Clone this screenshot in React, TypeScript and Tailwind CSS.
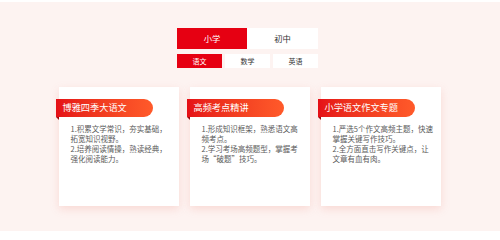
const cards = [
  {
    title: "博雅四季大语文",
    lines: [["1.积累文学常识，夯实基础，", "拓宽知识视野。"], ["2.培养阅读情操，熟读经典，", "强化阅读能力。"]],
  },
  {
    title: "高频考点精讲",
    lines: [["1.形成知识框架，熟悉语文高", "频考点。"], ["2.学习考场高频题型，掌握考", "场“破题”技巧。"]],
  },
  {
    title: "小学语文作文专题",
    lines: [["1.严选5个作文高频主题，快速", "掌握关键写作技巧。"], ["2.全方面直击写作关键点，让", "文章有血有肉。"]],
  },
];

function Card({ title, lines }: { title: string; lines: string[][] }) {
  return (
    <div className="relative h-[119px] w-[120px] bg-white pt-3 shadow-[0_3px_8px_rgba(240,150,140,0.28)]">
      <div className="relative -ml-[3px] flex h-[18px] w-[97px] items-center rounded-r-full bg-gradient-to-r from-[#e50f17] to-[#ff5a2a] pl-[7px] text-[9.2px] text-white">
        {title}
        <span className="absolute left-0 top-[18px] h-0 w-0 border-l-[3px] border-t-[3px] border-l-transparent border-t-[#9e0a0f]" />
      </div>
      <div className="mt-[7px] flex flex-col gap-[0.5px] pl-3 text-[7.5px] leading-[9.7px] text-[#5a5a5a]">
        {lines.map((p, i) => (
          <p key={i}>
            {p.map((l, j) => (
              <span key={j} className="block whitespace-nowrap">{l}</span>
            ))}
          </p>
        ))}
      </div>
    </div>
  );
}

export default function App() {
  return (
    <div
      className="flex h-[231px] w-[500px] flex-col items-center border-t-2 border-white bg-[#fdf3f1] pt-[26px]"
      style={{ fontFamily: '"Noto Sans CJK SC", "Noto Sans", sans-serif' }}
    >
      <div className="ml-[-5px] flex w-[141px] flex-col gap-[5px]">
        <div className="flex h-[21px] text-[8.3px]">
          <div className="flex w-[70px] items-center justify-center bg-[#e60012] text-white">小学</div>
          <div className="flex flex-1 items-center justify-center bg-white text-[#333]">初中</div>
        </div>
        <div className="flex h-[14px] gap-[3px] text-[7px]">
          <div className="flex w-[45px] items-center justify-center bg-[#e60012] text-white">语文</div>
          <div className="flex w-[45px] items-center justify-center bg-white text-[#333]">数学</div>
          <div className="flex w-[45px] items-center justify-center bg-white text-[#333]">英语</div>
        </div>
      </div>
      <div className="ml-[-1px] mt-[19px] flex gap-[11px]">
        {cards.map((c) => (
          <Card key={c.title} title={c.title} lines={c.lines} />
        ))}
      </div>
    </div>
  );
}
